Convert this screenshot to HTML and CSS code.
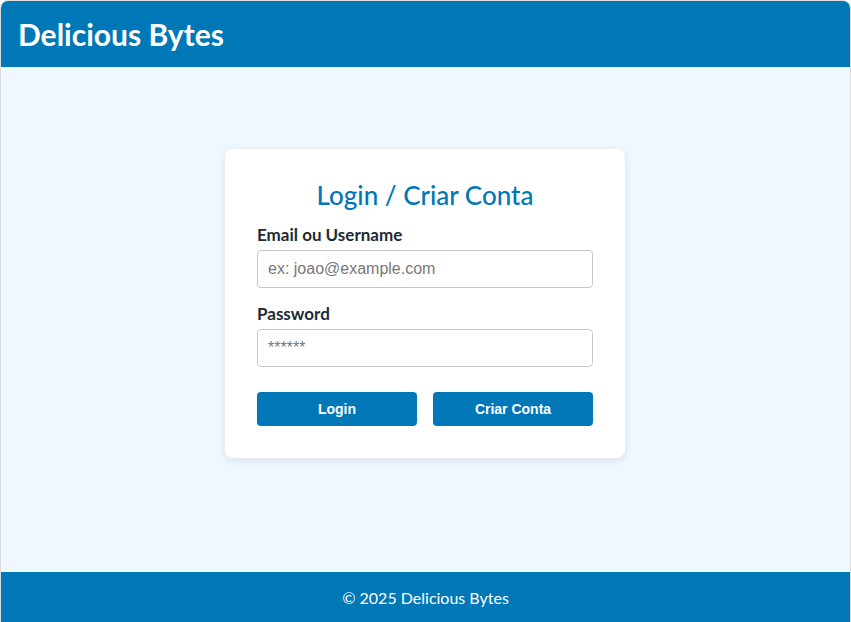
FILE: index.html
```html
<!DOCTYPE html>
<html lang="pt">
<head>
<meta charset="utf-8">
<title>Delicious Bytes</title>
<link rel="stylesheet" href="styles.css">
</head>
<body>
<div class="page">
  <header class="site-header">
    <h1 class="brand">Delicious Bytes</h1>
  </header>
  <main class="main">
    <section class="card">
      <h2 class="card-title">Login / Criar Conta</h2>
      <label class="field-label" for="user">Email ou Username</label>
      <input class="field-input" id="user" type="text" placeholder="ex: joao@example.com">
      <label class="field-label" for="pass">Password</label>
      <input class="field-input" id="pass" type="password" placeholder="******">
      <div class="actions">
        <button class="btn" type="button">Login</button>
        <button class="btn" type="button">Criar Conta</button>
      </div>
    </section>
  </main>
  <footer class="site-footer">© 2025 Delicious Bytes</footer>
</div>
</body>
</html>
```
FILE: styles.css
```css
* { box-sizing: border-box; }
html, body { margin: 0; padding: 0; }
body {
  font-family: Lato, "Open Sans", sans-serif;
  background: #ffffff;
}
.page {
  border: 1px solid #dcdcdc;
  border-radius: 8px 8px 0 0;
  overflow: hidden;
  display: flex;
  flex-direction: column;
}
.site-header {
  background: #0077b6;
  height: 66px;
  display: flex;
  align-items: center;
  padding: 0 17px;
}
.brand {
  margin: 0;
  color: #ffffff;
  font-size: 30px;
  font-weight: 700;
}
.main {
  background: #f0f8ff;
  height: 505px;
  padding: 82px 1px 0 0;
}
.card {
  width: 400px;
  margin: 0 auto;
  background: #ffffff;
  border-radius: 8px;
  box-shadow: 0 2px 8px rgba(0, 0, 0, 0.1);
  padding: 32px;
  display: flex;
  flex-direction: column;
}
.card-title {
  margin: 0 0 16px;
  text-align: center;
  color: #0077b6;
  font-size: 26px;
  font-weight: 500;
  line-height: 28px;
}
.field-label {
  font-size: 17px;
  line-height: 20px;
  font-weight: 700;
  color: #1c2b36;
  margin-bottom: 5px;
}
.field-input {
  height: 38px;
  border: 1px solid #c8c8c8;
  border-radius: 4px;
  padding: 0 10px;
  font-family: "Liberation Sans", Arial, sans-serif;
  font-size: 16px;
  margin-bottom: 16px;
}
.field-input::placeholder { color: #777777; }
.actions {
  margin-top: 9px;
  display: flex;
  gap: 16px;
}
.btn {
  flex: 1;
  height: 34px;
  border: none;
  border-radius: 4px;
  background: #0077b6;
  color: #ffffff;
  font-family: "Liberation Sans", Arial, sans-serif;
  font-size: 14px;
  font-weight: 700;
}
.site-footer {
  background: #0077b6;
  color: #ffffff;
  height: 50px;
  display: flex;
  align-items: center;
  justify-content: center;
  font-size: 16px;
}
```
